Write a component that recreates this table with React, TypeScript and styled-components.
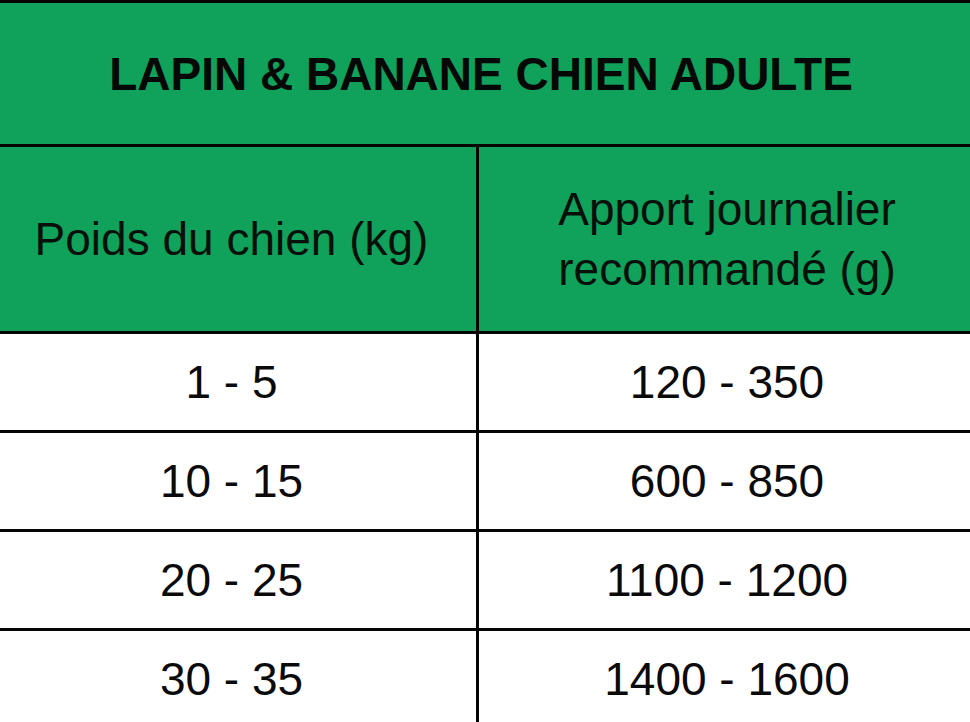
import React from "react";
import styled, { createGlobalStyle } from "styled-components";

const rows: [string, string][] = [
  ["1 - 5", "120 - 350"],
  ["10 - 15", "600 - 850"],
  ["20 - 25", "1100 - 1200"],
  ["30 - 35", "1400 - 1600"],
];

export default function App() {
  return (
    <>
      <GlobalStyle />
      <Page>
        <Table>
          <TitleCell>LAPIN &amp; BANANE CHIEN ADULTE</TitleCell>
          <HeadCell>Poids du chien (kg)</HeadCell>
          <HeadCell $divider>
            Apport journalier
            <br />
            recommandé (g)
          </HeadCell>
          {rows.map(([weight, amount]) => (
            <React.Fragment key={weight}>
              <BodyCell>{weight}</BodyCell>
              <BodyCell $divider>{amount}</BodyCell>
            </React.Fragment>
          ))}
        </Table>
      </Page>
    </>
  );
}

const GlobalStyle = createGlobalStyle`
  html, body {
    margin: 0;
    padding: 0;
    background: #ffffff;
    overflow: hidden;
  }
`;

const Page = styled.div`
  width: 970px;
  height: 722px;
  overflow: hidden;
  font-family: "Liberation Sans", Arial, sans-serif;
`;

const Table = styled.div`
  display: grid;
  grid-template-columns: 489px 499px;
  width: 988px;
  margin-left: -13px;
`;

const Cell = styled.div<{ $divider?: boolean }>`
  display: flex;
  align-items: center;
  justify-content: center;
  text-align: center;
  box-sizing: border-box;
  border-top: 3px solid #050505;
  border-left: ${(p) => (p.$divider ? "3px solid #050505" : "none")};
`;

const TitleCell = styled(Cell)`
  grid-column: 1 / span 2;
  height: 144px;
  background: #10a15a;
  color: #050806;
  font-size: 46px;
  font-weight: 700;
`;

const HeadCell = styled(Cell)`
  height: 187px;
  background: #10a15a;
  color: #07100a;
  font-size: 46px;
  line-height: 60px;
`;

const BodyCell = styled(Cell)`
  height: 99px;
  background: #ffffff;
  color: #0a0a0a;
  font-size: 46px;
`;
